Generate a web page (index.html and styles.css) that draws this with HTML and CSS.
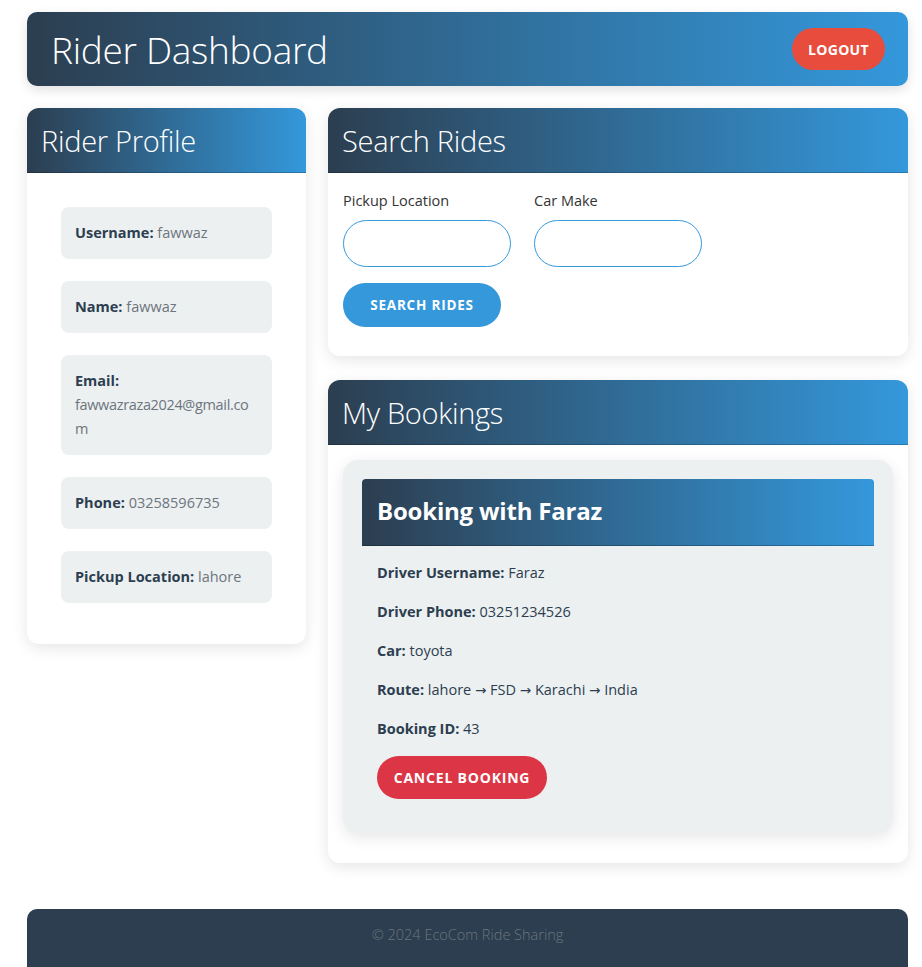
FILE: index.html
```html
<!DOCTYPE html>
<html lang="en">
<head>
<meta charset="utf-8">
<title>Rider Dashboard</title>
<link rel="stylesheet" href="styles.css">
</head>
<body>
<div class="page">
  <header class="topbar">
    <h1 class="topbar-title">Rider Dashboard</h1>
    <button class="btn btn-logout">Logout</button>
  </header>

  <main class="layout">
    <section class="card profile-card">
      <div class="card-header"><h3 class="card-title">Rider Profile</h3></div>
      <div class="card-body profile-body">
        <div class="info-item"><strong>Username:</strong> <span class="val">fawwaz</span></div>
        <div class="info-item"><strong>Name:</strong> <span class="val">fawwaz</span></div>
        <div class="info-item"><strong>Email:</strong> <span class="val val-email">fawwazraza2024@gmail.com</span></div>
        <div class="info-item"><strong>Phone:</strong> <span class="val">03258596735</span></div>
        <div class="info-item"><strong>Pickup Location:</strong> <span class="val">lahore</span></div>
      </div>
    </section>

    <div class="right-col">
      <section class="card">
        <div class="card-header"><h3 class="card-title">Search Rides</h3></div>
        <div class="card-body search-body">
          <div class="field-row">
            <div class="field">
              <label class="field-label">Pickup Location</label>
              <input class="field-input" type="text">
            </div>
            <div class="field">
              <label class="field-label">Car Make</label>
              <input class="field-input" type="text">
            </div>
          </div>
          <button class="btn btn-search">Search Rides</button>
        </div>
      </section>

      <section class="card">
        <div class="card-header"><h3 class="card-title">My Bookings</h3></div>
        <div class="card-body bookings-body">
          <div class="booking">
            <div class="booking-header"><h4 class="booking-title">Booking with Faraz</h4></div>
            <div class="booking-details">
              <p class="detail"><strong>Driver Username:</strong> Faraz</p>
              <p class="detail"><strong>Driver Phone:</strong> 03251234526</p>
              <p class="detail"><strong>Car:</strong> toyota</p>
              <p class="detail"><strong>Route:</strong> lahore <span class="arrow">→</span> FSD <span class="arrow">→</span> Karachi <span class="arrow">→</span> India</p>
              <p class="detail"><strong>Booking ID:</strong> 43</p>
              <button class="btn btn-cancel">Cancel Booking</button>
            </div>
          </div>
        </div>
      </section>
    </div>
  </main>

  <footer class="footer">© 2024 EcoCom Ride Sharing</footer>
</div>
</body>
</html>
```

FILE: styles.css
```css
* { box-sizing: border-box; }

html, body {
  margin: 0;
  padding: 0;
  background: #ffffff;
}

body {
  font-family: "Open Sans", "Noto Sans", "Liberation Sans", sans-serif;
  font-size: 15px;
  line-height: 24px;
  color: #2c3e50;
}

.page {
  width: 881px;
  margin: 12px 0 0 27px;
}

.topbar {
  height: 74px;
  display: flex;
  align-items: center;
  justify-content: space-between;
  padding: 0 23px 0 24px;
  border-radius: 10px;
  background: linear-gradient(to right, #2c3e50, #3498db);
  box-shadow: 0 4px 12px rgba(0, 0, 0, 0.12);
}

.topbar-title {
  margin: 0;
  font-weight: 300;
  font-size: 37px;
  line-height: 48px;
  color: #ffffff;
  letter-spacing: -0.3px;
  position: relative;
  top: 1px;
}

.btn {
  border: none;
  font-family: inherit;
  font-weight: 700;
  text-transform: uppercase;
  color: #ffffff;
  cursor: pointer;
  letter-spacing: 0.8px;
}

.btn-logout {
  width: 93px;
  height: 42px;
  border-radius: 21px;
  background: #e74c3c;
  font-size: 14px;
  letter-spacing: 0.3px;
}

.layout {
  display: grid;
  grid-template-columns: 279px 1fr;
  column-gap: 22px;
  align-items: start;
  margin-top: 22px;
}

.right-col {
  display: flex;
  flex-direction: column;
  gap: 24px;
}

.card {
  background: #ffffff;
  border-radius: 12px;
  box-shadow: 0 4px 15px rgba(0, 0, 0, 0.1);
  overflow: hidden;
}

.card-header {
  height: 65px;
  display: flex;
  align-items: center;
  padding: 2px 14px 0;
  background: linear-gradient(to right, #2c3e50, #3498db);
  border-bottom: 1px solid rgba(0, 0, 0, 0.2);
}

.card-title {
  margin: 0;
  font-weight: 300;
  font-size: 29px;
  line-height: 36px;
  color: #ffffff;
  letter-spacing: -0.3px;
}

.profile-body {
  padding: 34px 34px 41px;
  display: flex;
  flex-direction: column;
  gap: 22px;
}

.info-item {
  background: #ecf0f1;
  border-radius: 8px;
  padding: 14px;
  font-size: 14.5px;
  overflow-wrap: anywhere;
}

.info-item strong {
  color: #2c3e50;
}

.val {
  color: #6c757d;
}

.val-email {
  letter-spacing: -0.35px;
}

.search-body {
  padding: 15px 15px 29px;
}

.field-row {
  display: flex;
  gap: 23px;
}

.field {
  display: flex;
  flex-direction: column;
}

.field-label {
  color: #333333;
  font-size: 14.5px;
  margin-bottom: 8px;
  position: relative;
  top: 1px;
}

.field-input {
  width: 168px;
  height: 47px;
  border: 1px solid #3498db;
  border-radius: 24px;
  padding: 0 15px;
  font-family: inherit;
  font-size: 15px;
  outline: none;
  background: #ffffff;
}

.btn-search {
  margin-top: 16px;
  width: 158px;
  height: 44px;
  border-radius: 22px;
  background: #3498db;
  font-size: 13.5px;
}

.bookings-body {
  padding: 15px 15px 30px;
}

.booking {
  background: #ecf0f1;
  border-radius: 15px;
  padding: 19px 19px 34px;
  box-shadow: 0 4px 15px rgba(0, 0, 0, 0.1);
}

.booking-header {
  height: 67px;
  display: flex;
  align-items: center;
  padding: 0 15px 3px;
  border-radius: 4px 4px 0 0;
  background: linear-gradient(to right, #2c3e50, #3498db);
  border-bottom: 1px solid rgba(0, 0, 0, 0.25);
}

.booking-title {
  margin: 0;
  font-weight: 700;
  font-size: 24px;
  line-height: 32px;
  color: #ffffff;
  letter-spacing: -0.2px;
}

.booking-details {
  padding: 15px 15px 0;
}

.detail {
  margin: 0 0 15px;
  font-size: 14.5px;
  color: #2c3e50;
}

.arrow {
  font-family: "DejaVu Sans", sans-serif;
  font-size: 13.5px;
  line-height: 1;
}

.btn-cancel {
  width: 170px;
  height: 43px;
  border-radius: 22px;
  background: #dc3545;
  font-size: 14px;
}

.footer {
  margin-top: 46px;
  padding: 14px 0 31px;
  background: #2c3e50;
  border-radius: 10px 10px 0 0;
  text-align: center;
  color: #6c757d;
  font-size: 14.5px;
  font-weight: 300;
}
```
